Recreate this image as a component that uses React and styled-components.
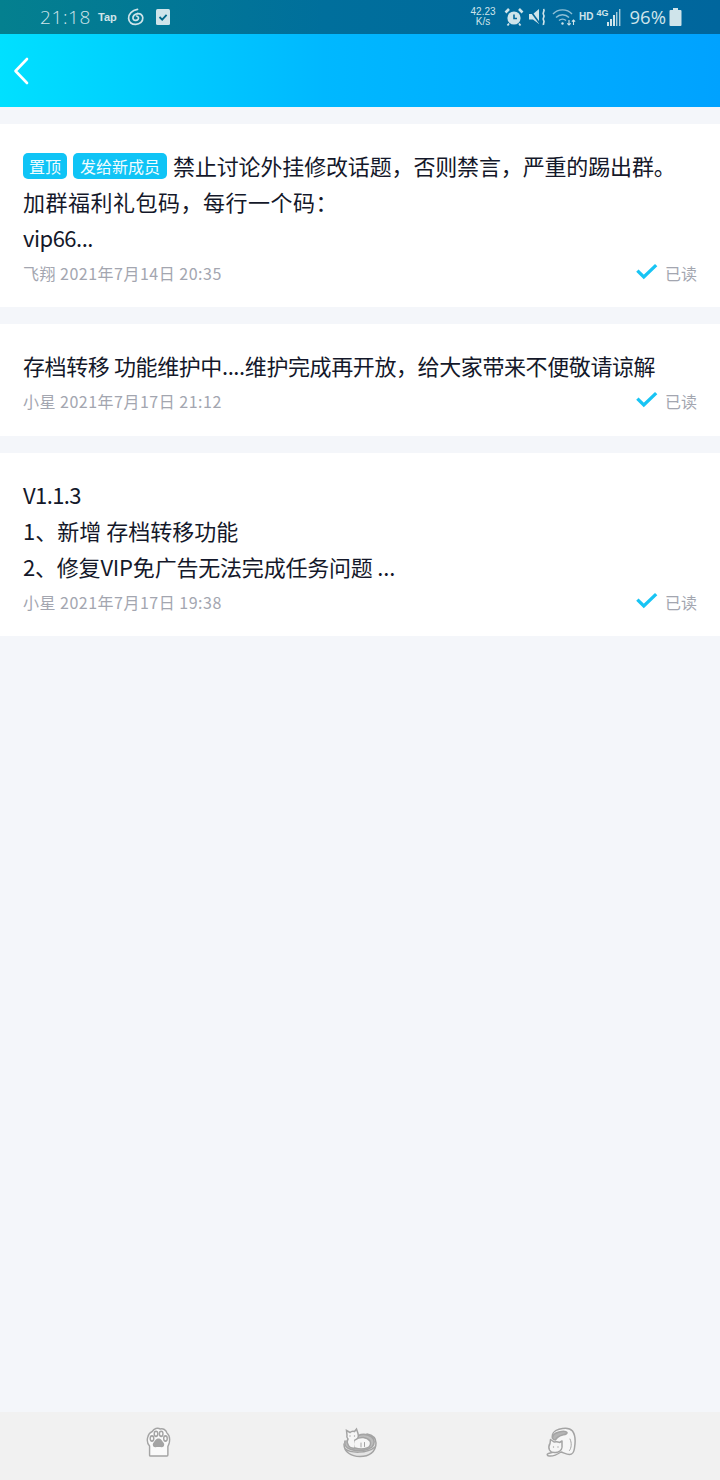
import React from "react";
import styled, { createGlobalStyle } from "styled-components";

const Global = createGlobalStyle`
  html, body { margin: 0; padding: 0; background: #f4f6fa; }
  * { box-sizing: border-box; }
`;

const CJK = `"Noto Sans CJK SC", "Noto Sans", sans-serif`;

const Page = styled.div`
  width: 720px;
  height: 1480px;
  display: flex;
  flex-direction: column;
  background: #f4f6fa;
  font-family: ${CJK};
  overflow: hidden;
`;
const StatusBar = styled.div`
  height: 34px;
  flex: none;
  display: flex;
  align-items: center;
  justify-content: space-between;
  padding: 0 38px 0 40px;
  color: #cfe4ea;
  background: linear-gradient(90deg, #04808f 0%, #006f9c 45%, #00669d 100%);
`;
const StatusGroup = styled.div`
  display: flex;
  align-items: center;
  gap: ${(p) => p.$gap || 0}px;
  margin-left: ${(p) => p.$left || 0}px;
`;
const Clock = styled.span`
  font-family: "Open Sans", sans-serif;
  font-weight: 300;
  font-size: 19px;
  letter-spacing: 0.6px;
  line-height: 34px;
  width: 58px;
`;
const TinyLabel = styled.span`
  font-family: "Liberation Sans", sans-serif;
  font-weight: 700;
  font-size: ${(p) => p.$size || 11}px;
  line-height: 1;
  margin-top: ${(p) => p.$top || 0}px;
  margin-right: ${(p) => p.$right || 0}px;
`;
const Speed = styled.span`
  font-family: "Liberation Sans", sans-serif;
  font-size: 10px;
  line-height: 10px;
  text-align: center;
  width: 32px;
  display: block;
`;
const Percent = styled.span`
  font-family: "Open Sans", sans-serif;
  font-weight: 400;
  font-size: 18.5px;
  line-height: 34px;
  margin-left: 5px;
`;
const Header = styled.div`
  height: 73px;
  flex: none;
  display: flex;
  align-items: center;
  padding: 0 0 0 13px;
  background: linear-gradient(90deg, #00e0ff 0%, #00b8ff 45%, #00a2ff 100%);
`;
const List = styled.div`
  flex: 1;
  display: flex;
  flex-direction: column;
  gap: 17px;
  padding-top: 17px;
`;
const Card = styled.div`
  background: #fff;
  padding: 23px 23px 17px 23px;
  color: #14182a;
`;
const Line = styled.div`
  font-size: 22px;
  line-height: 36px;
  white-space: nowrap;
  letter-spacing: ${(p) => p.$ls || 0}px;
`;
const Tag = styled.span`
  display: inline-block;
  height: 26px;
  line-height: 26px;
  padding: 0 ${(p) => p.$pad || 6}px;
  margin-right: 6px;
  border-radius: 5px;
  background: #10c4f6;
  color: #f2fcff;
  font-size: 16px;
  letter-spacing: 0;
  vertical-align: 2px;
`;
const Meta = styled.div`
  display: flex;
  align-items: center;
  justify-content: space-between;
  height: ${(p) => p.$height || 35}px;
  color: #a3a6b0;
  font-size: 16px;
  letter-spacing: 0.5px;
`;
const Read = styled.div`
  display: flex;
  align-items: center;
  gap: 7px;
  letter-spacing: 0;
`;
const CheckMark = styled.svg`
  margin-top: -3px;
`;
const TabBar = styled.div`
  height: 68px;
  flex: none;
  display: grid;
  grid-template-columns: repeat(3, 1fr);
  background: #f1f1f1;
  padding: 0 58px 8px;
`;
const Tab = styled.div`
  display: flex;
  align-items: center;
  justify-content: center;
`;

const Chevron = () => (
  <svg width="16" height="28" viewBox="0 0 16 28" fill="none">
    <path d="M14 2 L2.5 14 L14 26" stroke="#fff" strokeWidth="2.6" strokeLinecap="round" strokeLinejoin="round" />
  </svg>
);
const Check = () => (
  <CheckMark width="22" height="17" viewBox="0 0 24 18" fill="none">
    <path d="M1.5 8 L8.5 15 L22 2" stroke="#18c4f4" strokeWidth="3.6" strokeLinejoin="miter" />
  </CheckMark>
);
const Netease = () => (
  <svg width="18" height="18" viewBox="0 0 18 18" fill="none" stroke="#cfe4ea" strokeWidth="1.7" strokeLinecap="round" style={{ marginLeft: 10 }}>
    <path d="M10.5 1.4 C5 2.2 1.4 6 1.6 10.4 C1.8 14.4 5 16.6 8.8 16.4 C13 16.2 16 13.4 15.8 9.8 C15.6 7 13.2 5.2 10.6 5.6" />
    <path d="M10.6 5.6 C7.4 6 5.6 8.4 6 10.6 C6.4 12.6 9.6 13 11 11.4 C12 10.2 11.4 8.4 9.6 8" />
  </svg>
);
const Task = () => (
  <svg width="14" height="16" viewBox="0 0 14 16" style={{ marginLeft: 11 }}>
    <rect width="14" height="16" rx="1.5" fill="#cfe4ea" />
    <path d="M3.5 8 L6.2 10.6 L10.6 5.8" fill="none" stroke="#02688a" strokeWidth="1.8" />
  </svg>
);
const Alarm = () => (
  <svg width="20" height="20" viewBox="0 0 20 20" fill="none">
    <circle cx="10" cy="11" r="6.6" fill="#cfe4ea" />
    <path d="M10 7.5 V11.5 H13" stroke="#03699c" strokeWidth="1.6" />
    <path d="M1.5 5.5 L5 2 M18.5 5.5 L15 2" stroke="#cfe4ea" strokeWidth="2.6" />
    <path d="M5 16.5 L3.5 18.5 M15 16.5 L16.5 18.5" stroke="#cfe4ea" strokeWidth="1.8" />
  </svg>
);
const Mute = () => (
  <svg width="20" height="20" viewBox="0 0 20 20" fill="none">
    <path d="M1 7 H5 L11 2 V17 L5 12.5 H1 Z" fill="#cfe4ea" />
    <path d="M1.5 2.5 L12.5 17.5" stroke="#03699c" strokeWidth="1.6" />
    <path d="M15.5 2 C17.5 4 14 5.5 15.5 7.5 C17.5 10 14 11 15.5 13 C17 15 15 16 15.5 18" stroke="#cfe4ea" strokeWidth="1.7" />
  </svg>
);
const Wifi = () => (
  <svg width="24" height="20" viewBox="0 0 24 20" fill="none" stroke="#8fc0d6" strokeWidth="1.4">
    <path d="M1 7 C6 1.5 15 1.5 20 7" />
    <path d="M4 10.5 C7.5 6.8 13.5 6.8 17 10.5" />
    <path d="M7 13.6 C9 11.8 12 11.8 14 13.6" />
    <circle cx="10.5" cy="16.5" r="1.2" fill="#cfe4ea" stroke="none" />
    <path d="M17 13 V18 M15.3 16.4 L17 18 L18.7 16.4 M21.5 18 V13 M19.9 14.6 L21.5 13 L23.1 14.6" stroke="#cfe4ea" strokeWidth="1.1" />
  </svg>
);
const Signal = () => (
  <svg width="16" height="18" viewBox="0 0 14 18" fill="#cfe4ea">
    <rect x="0" y="14" width="2" height="4" />
    <rect x="3" y="11" width="2" height="7" />
    <rect x="6" y="7" width="2" height="11" />
    <rect x="9" y="4" width="1.4" height="14" opacity="0.8" />
    <rect x="12" y="1" width="1.4" height="17" opacity="0.8" />
  </svg>
);
const Battery = () => (
  <svg width="13" height="18" viewBox="0 0 12 18" fill="#cfe4ea">
    <rect x="3.5" y="0" width="5" height="2" />
    <rect x="0" y="2" width="12" height="16" rx="1" />
  </svg>
);

const G = "#a4a4a4";
const Paw = () => (
  <svg width="25" height="31" viewBox="0 0 28 31" preserveAspectRatio="none" fill="none" stroke={G} strokeWidth="1.6">
    <path d="M4 28.5 V19 C1.5 16.5 1 13 2 10 C3 6.5 5.5 5 7 4.5 C9 1.5 13 0.5 16 2 C19 1 22.5 3 23.5 6 C26 8 27 12 26 16 C25.6 17.4 25 18.5 24.5 19.5 V28 Q24.5 29 23.5 29 H5 Q4 29 4 28.5 Z" fill="#fafafa" />
    <ellipse cx="6.7" cy="11.5" rx="2" ry="2.6" />
    <ellipse cx="11.2" cy="6.8" rx="2" ry="2.6" />
    <ellipse cx="17" cy="6.8" rx="2" ry="2.6" />
    <ellipse cx="21.8" cy="11.5" rx="2" ry="2.6" />
    <path d="M14 11.5 C17 11.5 18 14 19.5 15.5 C21.5 17.5 20 20.5 17.5 20.2 C15.5 20 12.5 20 10.5 20.2 C8 20.5 6.6 17.5 8.5 15.5 C10 14 11 11.5 14 11.5 Z" fill={G} stroke="none" />
  </svg>
);
const CatBed = () => (
  <svg width="34" height="32" viewBox="0 0 34 32" fill="none" stroke={G} strokeWidth="1.5" strokeLinecap="round">
    <path d="M1 18 C1 26 8 30.5 17 30.5 C26 30.5 33 26 33 17 C33 12 29 9 24 8" fill="#e4e4e4" />
    <path d="M2.5 23 C7 27 24 28 32 21" />
    <path d="M2 15 C1 20 3 22 8 23.5 C15 25.5 24 25 29 21 C32 18 32 13 28 10.5 C24 8 19 8 15 9.5" fill="#bcbcbc" />
    <path d="M4 9 L3.5 4.5 L7 6.5 C8 5.5 10 5 11.5 5.5 L13.5 3 L15 7.5 C16 11 14.5 13.5 12 14.5 C13 17 13 20 12 22 C9 22.5 6 21 5 18.5 C4 16.5 4 14.5 5 13 C4 12 3.5 10.5 4 9 Z" fill="#f6f6f6" />
    <path d="M12 14 C17 10 24 11 27 15 C28.5 18 27 21 24 22 C20 23.5 15 23 12 22" fill="#f6f6f6" />
    <path d="M18 17 V21 M21.5 16.5 V20.5" strokeWidth="1" />
    <circle cx="7" cy="10" r="0.7" fill={G} stroke="none" />
    <circle cx="11.5" cy="10" r="0.7" fill={G} stroke="none" />
  </svg>
);
const CatStretch = () => (
  <svg width="30" height="31" viewBox="0 0 30 31" fill="none" stroke={G} strokeWidth="1.5" strokeLinecap="round" strokeLinejoin="round">
    <path d="M6.5 11 C5.5 7 8 3.5 13 2.2 C18 0.8 24 1 26.5 4 C29 7.5 29.5 15 28.5 21 C28 25 26 27.5 23.5 27.5 C21 27.5 18 26 15 25 C12 27 7 29.5 3 29 C1 28.8 0.5 27 2.5 26.5 L6 25.6" fill="#f6f6f6" />
    <path d="M6.5 11 C6.5 8 9 6 13 5 C16 4.2 20 4 21 5.5 C21.5 7 19 7.4 16.5 8 C13 9 10.5 10.5 9.5 13 C8.2 13 7 12.4 6.5 11 Z" fill="#b4b4b4" />
    <path d="M4 16.5 L4.5 12.5 L8 15 C10 14.5 12 14.5 13.5 15.5 L16 14 L16 18.5 C16.6 21 15 24 12 25 C8.5 26 5 25.6 3.5 23 C2.5 21 2.8 18.5 4 16.5 Z" fill="#f6f6f6" />
    <path d="M24 12 C26 16 25.5 21 23.5 23.5" strokeWidth="1" />
    <circle cx="7.5" cy="20" r="0.7" fill={G} stroke="none" />
    <circle cx="12" cy="20" r="0.7" fill={G} stroke="none" />
  </svg>
);

const MetaRow = ({ children, height }) => (
  <Meta $height={height}>
    <span>{children}</span>
    <Read>
      <Check />
      <span>已读</span>
    </Read>
  </Meta>
);

export default function App() {
  return (
    <Page>
      <Global />
      <StatusBar>
        <StatusGroup>
          <Clock>21:18</Clock>
          <TinyLabel>Tap</TinyLabel>
          <Netease />
          <Task />
        </StatusGroup>
        <StatusGroup $gap={3}>
          <Speed>42.23<br />K/s</Speed>
          <StatusGroup $gap={4} $left={2}>
            <Alarm />
            <Mute />
            <Wifi />
          </StatusGroup>
          <TinyLabel $size={10}>HD</TinyLabel>
          <StatusGroup>
            <TinyLabel $size={9} $top={-8} $right={-3}>4G</TinyLabel>
            <Signal />
          </StatusGroup>
          <Percent>96%</Percent>
          <Battery />
        </StatusGroup>
      </StatusBar>
      <Header>
        <Chevron />
      </Header>
      <List>
        <Card>
          <Line $ls={-0.15}>
            <Tag>置顶</Tag>
            <Tag $pad={7}>发给新成员</Tag>
            禁止讨论外挂修改话题，否则禁言，严重的踢出群。
          </Line>
          <Line $ls={0.5}>加群福利礼包码，每行一个码：</Line>
          <Line $ls={-0.5}>vip66...</Line>
          <MetaRow>飞翔 2021年7月14日 20:35</MetaRow>
        </Card>
        <Card>
          <Line $ls={-0.4}>存档转移 功能维护中....维护完成再开放，给大家带来不便敬请谅解</Line>
          <MetaRow height={36}>小星 2021年7月17日 21:12</MetaRow>
        </Card>
        <Card>
          <Line $ls={-0.6}>V1.1.3</Line>
          <Line>1、新增 存档转移功能</Line>
          <Line $ls={-0.2}>2、修复VIP免广告无法完成任务问题 ...</Line>
          <MetaRow>小星 2021年7月17日 19:38</MetaRow>
        </Card>
      </List>
      <TabBar>
        <Tab><Paw /></Tab>
        <Tab><CatBed /></Tab>
        <Tab><CatStretch /></Tab>
      </TabBar>
    </Page>
  );
}
